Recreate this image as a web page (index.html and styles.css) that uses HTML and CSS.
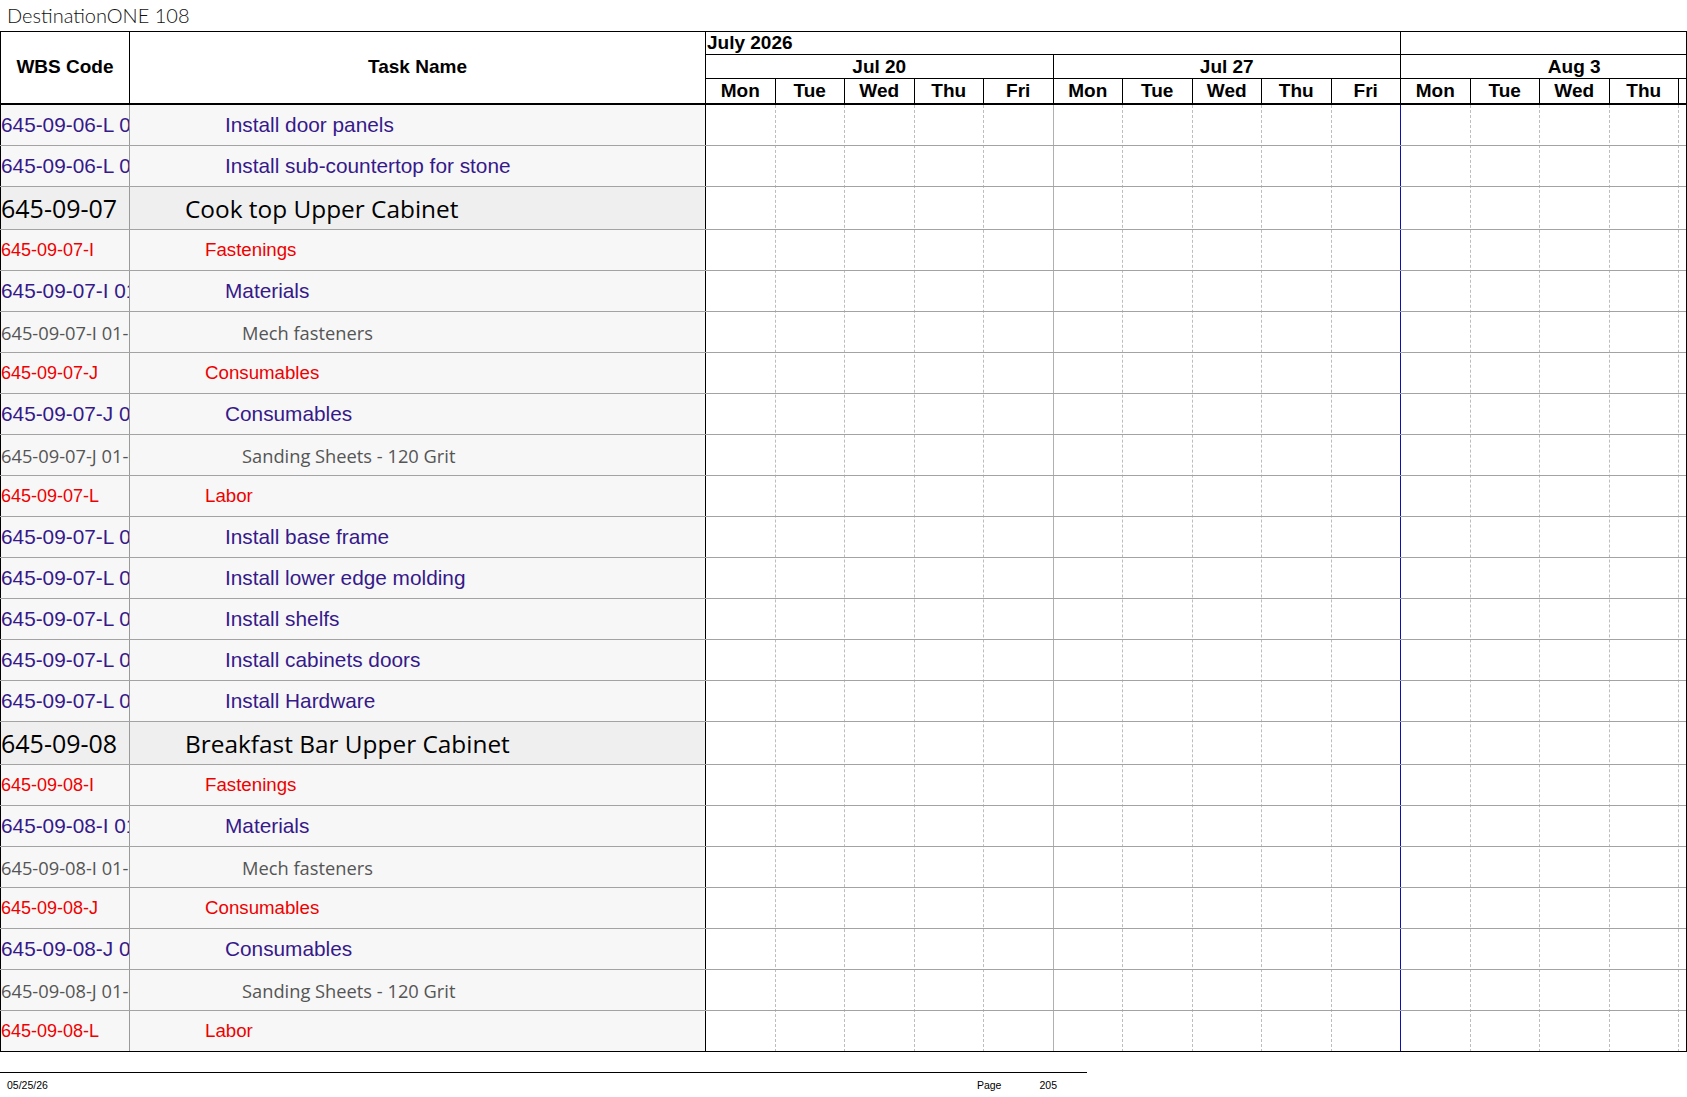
FILE: index.html
```html
<!DOCTYPE html>
<html>
<head>
<meta charset="utf-8">
<link rel="stylesheet" href="styles.css">
</head>
<body>
<div class="title">DestinationONE 108</div>
<div class="chart">
  <div class="h-wbs">WBS Code</div>
  <div class="h-task">Task Name</div>
  <div class="h-time">
    <div class="months">
      <div class="month m-jul">July 2026</div>
      <div class="month m-aug"></div>
    </div>
    <div class="weeks">
      <div class="week">Jul 20</div>
      <div class="week">Jul 27</div>
      <div class="week">Aug 3</div>
    </div>
    <div class="days">
      <div class="day">Mon</div><div class="day">Tue</div><div class="day">Wed</div><div class="day">Thu</div><div class="day">Fri</div>
      <div class="day">Mon</div><div class="day">Tue</div><div class="day">Wed</div><div class="day">Thu</div><div class="day">Fri</div>
      <div class="day">Mon</div><div class="day">Tue</div><div class="day">Wed</div><div class="day">Thu</div><div class="day">Fri</div>
    </div>
  </div>

  <div class="rows">
    <div class="row purple"><div class="wbs">645-09-06-L 05</div><div class="task">Install door panels</div></div>
    <div class="row purple"><div class="wbs">645-09-06-L 06</div><div class="task">Install sub-countertop for stone</div></div>
    <div class="row big"><div class="wbs">645-09-07</div><div class="task">Cook top Upper Cabinet</div></div>
    <div class="row red"><div class="wbs">645-09-07-I</div><div class="task">Fastenings</div></div>
    <div class="row purple"><div class="wbs">645-09-07-I 01</div><div class="task">Materials</div></div>
    <div class="row gray"><div class="wbs">645-09-07-I 01-01</div><div class="task">Mech fasteners</div></div>
    <div class="row red"><div class="wbs">645-09-07-J</div><div class="task">Consumables</div></div>
    <div class="row purple"><div class="wbs">645-09-07-J 01</div><div class="task">Consumables</div></div>
    <div class="row gray"><div class="wbs">645-09-07-J 01-01</div><div class="task">Sanding Sheets - 120 Grit</div></div>
    <div class="row red"><div class="wbs">645-09-07-L</div><div class="task">Labor</div></div>
    <div class="row purple"><div class="wbs">645-09-07-L 01</div><div class="task">Install base frame</div></div>
    <div class="row purple"><div class="wbs">645-09-07-L 02</div><div class="task">Install lower edge molding</div></div>
    <div class="row purple"><div class="wbs">645-09-07-L 03</div><div class="task">Install shelfs</div></div>
    <div class="row purple"><div class="wbs">645-09-07-L 04</div><div class="task">Install cabinets doors</div></div>
    <div class="row purple"><div class="wbs">645-09-07-L 05</div><div class="task">Install Hardware</div></div>
    <div class="row big"><div class="wbs">645-09-08</div><div class="task">Breakfast Bar Upper Cabinet</div></div>
    <div class="row red"><div class="wbs">645-09-08-I</div><div class="task">Fastenings</div></div>
    <div class="row purple"><div class="wbs">645-09-08-I 01</div><div class="task">Materials</div></div>
    <div class="row gray"><div class="wbs">645-09-08-I 01-01</div><div class="task">Mech fasteners</div></div>
    <div class="row red"><div class="wbs">645-09-08-J</div><div class="task">Consumables</div></div>
    <div class="row purple"><div class="wbs">645-09-08-J 01</div><div class="task">Consumables</div></div>
    <div class="row gray"><div class="wbs">645-09-08-J 01-01</div><div class="task">Sanding Sheets - 120 Grit</div></div>
    <div class="row red"><div class="wbs">645-09-08-L</div><div class="task">Labor</div></div>
  </div>

  <div class="gantt">
    <div class="cols">
      <div class="col"></div><div class="col"></div><div class="col"></div><div class="col"></div><div class="col week-end"></div>
      <div class="col"></div><div class="col"></div><div class="col"></div><div class="col"></div><div class="col month-end"></div>
      <div class="col"></div><div class="col"></div><div class="col"></div><div class="col"></div><div class="col"></div>
    </div>
    <div class="glines">
      <div class="gl"></div><div class="gl"></div><div class="gl big"></div>
      <div class="gl"></div><div class="gl"></div><div class="gl"></div><div class="gl"></div><div class="gl"></div><div class="gl"></div>
      <div class="gl"></div><div class="gl"></div><div class="gl"></div><div class="gl"></div><div class="gl"></div><div class="gl"></div>
      <div class="gl big"></div>
      <div class="gl"></div><div class="gl"></div><div class="gl"></div><div class="gl"></div><div class="gl"></div><div class="gl"></div><div class="gl"></div>
    </div>
  </div>
</div>
<div class="footer">
  <div class="f-date">05/25/26</div>
  <div class="f-page">Page</div>
  <div class="f-num">205</div>
</div>
</body>
</html>
```

FILE: styles.css
```css
* { box-sizing: border-box; }

body {
  margin: 0;
  width: 1687px;
  background: #fff;
  font-family: "Liberation Sans", Arial, sans-serif;
  color: #000;
}

.title {
  height: 31px;
  padding-left: 7px;
  font-family: "Lato", "Open Sans", sans-serif;
  font-weight: 300;
  font-size: 20px;
  line-height: 30px;
  color: #111;
}

.chart {
  display: grid;
  grid-template-columns: 130px 576px 981px;
  grid-template-rows: 73px auto;
  border-top: 1px solid #000;
}

/* header */
.h-wbs, .h-task {
  display: flex;
  align-items: center;
  justify-content: center;
  font-weight: bold;
  font-size: 19px;
  border-bottom: 2px solid #000;
  border-right: 1px solid #000;
  padding-bottom: 2px;
}
.h-wbs { border-left: 1px solid #000; }

.h-time {
  border-bottom: 2px solid #000;
  border-right: 1px solid #000;
  overflow: hidden;
  font-weight: bold;
  font-size: 19px;
}
.months, .weeks, .days {
  display: flex;
  border-bottom: 1px solid #000;
}
.months { height: 23px; }
.weeks { height: 24px; }
.days { height: 24px; border-bottom: none; }

.month {
  line-height: 21px;
  padding-left: 1px;
  white-space: nowrap;
}
.m-jul { flex: 0 0 695px; border-right: 1px solid #000; }
.m-aug { flex: 1 0 auto; }

.week {
  flex: 0 0 347.5px;
  border-right: 1px solid #000;
  text-align: center;
  line-height: 23px;
}
.day {
  flex: 0 0 69.5px;
  border-right: 1px solid #000;
  text-align: center;
  line-height: 23px;
}

/* body rows */
.rows {
  grid-column: 1 / 3;
  display: flex;
  flex-direction: column;
}
.row {
  display: grid;
  grid-template-columns: 130px 576px;
  height: 41px;
  background: #f7f7f7;
  border-bottom: 1px solid #a3a3a3;
}
.row:last-child { border-bottom-color: #000; }
.row.big { height: 43px; background: #efefef; }

.wbs, .task {
  display: flex;
  align-items: center;
  white-space: nowrap;
  overflow: hidden;
}
.wbs {
  border-left: 1px solid #000;
  border-right: 1px solid #9a9a9a;
  padding-left: 0;
}
.task { border-right: 1px solid #000; }

.purple { color: #36198a; }
.purple .wbs, .purple .task { font-size: 20.8px; }
.purple .task { padding-left: 95px; }

.red { color: #ee0000; }
.red .wbs { font-size: 18px; }
.red .task { font-size: 18.7px; padding-left: 75px; }

.gray { color: #555; }
.gray .wbs, .gray .task {
  font-family: "Open Sans", "Noto Sans", sans-serif;
  font-size: 18.3px;
}
.gray .task { padding-left: 112px; }

.big { color: #000; }
.big .wbs, .big .task {
  font-family: "Open Sans", "Noto Sans", sans-serif;
  font-size: 25px;
}
.big .task { font-size: 24.4px; padding-left: 55px; }

/* gantt body */
.gantt {
  grid-column: 3;
  display: grid;
  border-right: 1px solid #000;
  overflow: hidden;
  background: #fff;
}
.cols, .glines { grid-area: 1 / 1; }
.cols { display: flex; }
.col {
  flex: 0 0 69.5px;
  border-right: 1px dashed #bdbdbd;
}
.col.week-end { border-right: 1px solid #b0b0b0; }
.col.month-end { border-right: 1px solid #1010b0; }

.glines {
  display: flex;
  flex-direction: column;
}
.gl {
  height: 41px;
  border-bottom: 1px solid #a3a3a3;
}
.gl.big { height: 43px; }
.gl:last-child { border-bottom-color: #000; }

/* footer */
.footer {
  margin-top: 20px;
  width: 1087px;
  border-top: 1px solid #000;
  display: flex;
  padding: 6px 30px 0 7px;
  font-size: 10.5px;
  color: #000;
}
.f-date { flex: 1; }
.f-page { margin-right: 38px; }
```
